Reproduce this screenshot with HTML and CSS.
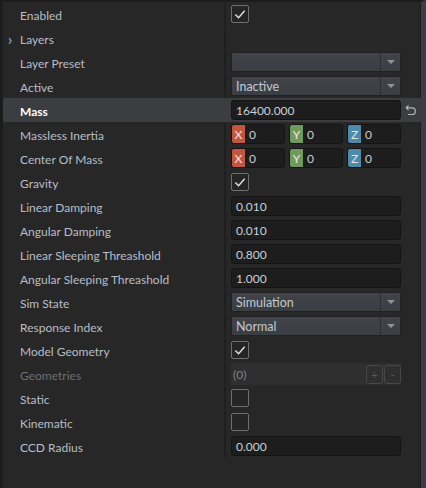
FILE: index.html
```html
<!DOCTYPE html>
<html lang="en">
<head>
  <meta charset="UTF-8" />
  <title>Rigid Body</title>
  <link rel="stylesheet" href="styles.css">
</head>
<body>
  <div class="panel">
    <div class="rows">
      <div class="row">
        <div class="label">Enabled</div>
        <div class="value"><span class="check on"><svg viewBox="0 0 17 17"><polyline points="3.5,9 7,12.5 13.5,5"/></svg></span></div>
      </div>
      <div class="row">
        <div class="label"><span class="chev">›</span>Layers</div>
        <div class="value"></div>
      </div>
      <div class="row">
        <div class="label">Layer Preset</div>
        <div class="value"><div class="select"><span class="txt"></span><span class="arrow"></span></div></div>
      </div>
      <div class="row">
        <div class="label">Active</div>
        <div class="value"><div class="select"><span class="txt">Inactive</span><span class="arrow"></span></div></div>
      </div>
      <div class="row selected">
        <div class="label">Mass</div>
        <div class="value"><div class="field">16400.000</div></div>
        <div class="extra">
          <svg class="reset" viewBox="0 0 12 12"><path d="M3.5 1 L1.2 3.3 L3.5 5.6 M1.2 3.3 H7 A3.3 3.3 0 0 1 7 10 H3"/></svg>
        </div>
      </div>
      <div class="row">
        <div class="label">Massless Inertia</div>
        <div class="value vec">
          <div class="axis"><span class="tag x">X</span><span class="num">0</span></div>
          <div class="axis"><span class="tag y">Y</span><span class="num">0</span></div>
          <div class="axis"><span class="tag z">Z</span><span class="num">0</span></div>
        </div>
      </div>
      <div class="row">
        <div class="label">Center Of Mass</div>
        <div class="value vec">
          <div class="axis"><span class="tag x">X</span><span class="num">0</span></div>
          <div class="axis"><span class="tag y">Y</span><span class="num">0</span></div>
          <div class="axis"><span class="tag z">Z</span><span class="num">0</span></div>
        </div>
      </div>
      <div class="row">
        <div class="label">Gravity</div>
        <div class="value"><span class="check on"><svg viewBox="0 0 17 17"><polyline points="3.5,9 7,12.5 13.5,5"/></svg></span></div>
      </div>
      <div class="row">
        <div class="label">Linear Damping</div>
        <div class="value"><div class="field">0.010</div></div>
      </div>
      <div class="row">
        <div class="label">Angular Damping</div>
        <div class="value"><div class="field">0.010</div></div>
      </div>
      <div class="row">
        <div class="label">Linear Sleeping Threashold</div>
        <div class="value"><div class="field">0.800</div></div>
      </div>
      <div class="row">
        <div class="label">Angular Sleeping Threashold</div>
        <div class="value"><div class="field">1.000</div></div>
      </div>
      <div class="row">
        <div class="label">Sim State</div>
        <div class="value"><div class="select"><span class="txt">Simulation</span><span class="arrow"></span></div></div>
      </div>
      <div class="row">
        <div class="label">Response Index</div>
        <div class="value"><div class="select"><span class="txt">Normal</span><span class="arrow"></span></div></div>
      </div>
      <div class="row">
        <div class="label">Model Geometry</div>
        <div class="value"><span class="check on"><svg viewBox="0 0 17 17"><polyline points="3.5,9 7,12.5 13.5,5"/></svg></span></div>
      </div>
      <div class="row">
        <div class="label disabled">Geometries</div>
        <div class="value">
          <div class="list">
            <span class="txt">(0)</span>
            <span class="btn">+</span><span class="btn">-</span>
          </div>
        </div>
      </div>
      <div class="row">
        <div class="label">Static</div>
        <div class="value"><span class="check"></span></div>
      </div>
      <div class="row">
        <div class="label">Kinematic</div>
        <div class="value"><span class="check"></span></div>
      </div>
      <div class="row">
        <div class="label">CCD Radius</div>
        <div class="value"><div class="field">0.000</div></div>
      </div>
    </div>
  </div>
</body>
</html>
```

FILE: styles.css
```css
* { box-sizing: border-box; margin: 0; padding: 0; }

body {
  background: #1c1c1c;
  font-family: "Lato", "Noto Sans", sans-serif;
  font-size: 12px;
  color: #b6bec8;
  overflow: hidden;
}

.panel {
  width: 426px;
  height: 488px;
  background: #272727;
  border-left: 3px solid #1c1c1c;
  border-top: 2px solid #1c1c1c;
  border-right: 5px solid #3d3e44;
  box-shadow: inset -1px 0 0 #1c1c1c;
}

.rows { display: flex; flex-direction: column; }

.row {
  display: flex;
  align-items: center;
  height: 24px;
}

.row.selected { background: #3c3d41; }

.label {
  width: 223px;
  height: 23px;
  padding: 2px 0 0 17px;
  display: flex;
  align-items: center;
  border-right: 2px solid #1f1f1f;
  position: relative;
}

.row.selected .label {
  color: #ffffff;
  font-weight: bold;
  border-right-color: #3c3d41;
}

.label.disabled { color: #6c7075; }

.chev {
  position: absolute;
  left: 5px;
  top: 3px;
  color: #5ea4d8;
  font-size: 15px;
  font-weight: bold;
}

.value {
  width: 170px;
  margin-left: 5px;
  display: flex;
  align-items: center;
}

.extra {
  width: 20px;
  display: flex;
  justify-content: center;
}

.reset {
  width: 12px;
  height: 13px;
  fill: none;
  stroke: #b4b4b4;
  stroke-width: 1.2;
}

.check {
  width: 18px;
  height: 18px;
  border: 1px solid #6e6e6e;
  border-radius: 2px;
  background: #252525;
  display: flex;
}

.check svg {
  width: 16px;
  height: 16px;
  fill: none;
  stroke: #dcdcdc;
  stroke-width: 1.6;
}

.field {
  width: 171px;
  height: 20px;
  background: #1d1d1d;
  border: 1px solid #141414;
  border-radius: 3px;
  padding: 1px 0 0 4px;
  display: flex;
  align-items: center;
  color: #c8d0d8;
}

.select {
  width: 170px;
  height: 20px;
  display: flex;
  background: linear-gradient(#41454a, #3a3d42);
  border: 1px solid #1f2124;
  border-radius: 2px;
  color: #c2cad2;
}

.select .txt {
  flex: 1;
  padding: 1px 0 0 4px;
  display: flex;
  align-items: center;
  font-size: 12.5px;
}

.select .arrow {
  width: 20px;
  border-left: 1px solid #2a2d31;
  position: relative;
}

.select .arrow::after {
  content: "";
  position: absolute;
  left: 6px;
  top: 7px;
  border-left: 4px solid transparent;
  border-right: 4px solid transparent;
  border-top: 4px solid #8c939b;
}

.vec { gap: 4px; }

.axis {
  flex: 1;
  height: 20px;
  display: flex;
  background: #1d1d1d;
  border: 1px solid #141414;
  border-radius: 3px;
  overflow: hidden;
}

.tag {
  width: 13px;
  display: flex;
  align-items: center;
  justify-content: center;
  color: #f2e8e0;
  font-size: 12px;
}

.tag.x { background: #c4563e; }
.tag.y { background: #6f9a5e; }
.tag.z { background: #4d8aa9; }

.num {
  padding: 1px 0 0 4px;
  display: flex;
  align-items: center;
  color: #c8d0d8;
}

.list {
  width: 171px;
  height: 22px;
  background: #2f2f2f;
  display: flex;
  align-items: center;
  padding-left: 2px;
  gap: 1px;
}

.list .txt {
  flex: 1;
  padding-top: 1px;
  color: #7a848e;
}

.list .btn {
  width: 17px;
  height: 19px;
  border: 1px solid #484848;
  border-radius: 3px;
  display: flex;
  align-items: center;
  justify-content: center;
  color: #5a5a5a;
  font-size: 11px;
}
```
